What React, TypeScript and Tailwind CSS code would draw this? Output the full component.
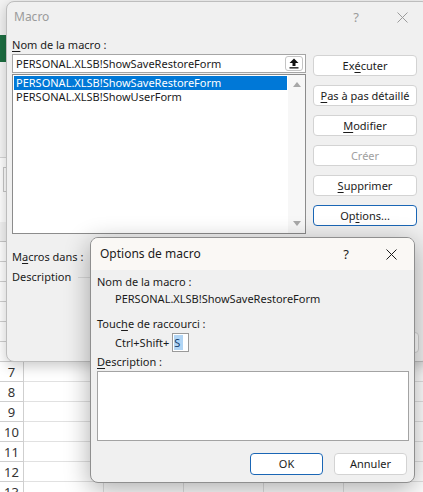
import React from 'react';

const rows = [1, 2, 3, 4, 5, 6, 7, 8, 9, 10, 11, 12, 13];
const cols = [0, 1, 2, 3, 4];

function U({ children }: { children: React.ReactNode }) {
  return <span className="underline underline-offset-[2px] decoration-[1px]">{children}</span>;
}

function CloseIcon({ color }: { color: string }) {
  return (
    <svg width="11" height="11" viewBox="0 0 11 11">
      <path d="M0.5 0.5 L10.5 10.5 M10.5 0.5 L0.5 10.5" stroke={color} strokeWidth="1" />
    </svg>
  );
}

function Btn({
  children,
  primary,
  disabled,
  className = '',
}: {
  children: React.ReactNode;
  primary?: boolean;
  disabled?: boolean;
  className?: string;
}) {
  return (
    <div
      className={`flex items-center justify-center rounded-[4px] bg-white ${
        primary ? 'border-[1.5px] border-[#1a66b5]' : 'border border-[#d3d3d3]'
      } ${disabled ? 'text-[#a0a0a0]' : 'text-[#1b1b1b]'} ${className}`}
    >
      {children}
    </div>
  );
}

export default function App() {
  return (
    <div className="relative w-[423px] h-[492px] overflow-hidden bg-white text-[11px] leading-[16px] text-[#1b1b1b] font-['Noto_Sans',sans-serif]">
      {/* Excel behind the dialogs */}
      <div className="flex flex-col">
        <div className="h-[35px] bg-[#f3f3f3]" />
        <div className="h-[27px] bg-[#1d6f42]" />
        <div className="h-[96px] bg-[#f7f7f7] border-b border-[#d6d6d6]" />
        <div className="h-[64px] bg-white pt-[9px]">
          <div className="ml-[3px] h-[25px] w-[60px] border border-[#c8c8c8] bg-white" />
        </div>
        <div className="h-[20px] bg-[#f3f3f3] border-b border-[#c8c8c8]" />
        {rows.map((r) => (
          <div key={r} className="flex h-[20px] shrink-0">
            <div className="w-[24px] shrink-0 border-r border-b border-[#cfcfcf] bg-white flex items-center justify-center text-[13px] text-[#333]">
              {r >= 7 ? r : ''}
            </div>
            {cols.map((c) => (
              <div key={c} className="w-[80px] shrink-0 border-r border-b border-[#e1e1e1]" />
            ))}
          </div>
        ))}
      </div>

      {/* Macro dialog */}
      <div className="absolute left-[6px] top-[1px] w-[424px] h-[361px] rounded-[8px] border border-[#bdbdbd] bg-[#f0f0f0] shadow-[0_4px_14px_rgba(0,0,0,0.22)] flex flex-col">
        <div className="flex h-[30px] items-center pl-[7px] pr-[4px] text-[#9b9b9b]">
          <span className="text-[12px]">Macro</span>
          <span className="ml-auto w-[46px] text-center text-[13px]">?</span>
          <span className="w-[46px] flex justify-center">
            <CloseIcon color="#9b9b9b" />
          </span>
        </div>

        <div className="flex pl-[5px]">
          <div className="w-[294px] flex flex-col">
            <div className="mt-[5px] h-[16px]">
              <U>N</U>om de la macro :
            </div>
            <div className="mt-[1px] h-[19px] flex items-center border border-[#a5a5a5] bg-white pl-[3px] pr-[2px]">
              <span className="pt-[1px]">PERSONAL.XLSB!ShowSaveRestoreForm</span>
              <div className="ml-auto h-[15px] w-[18px] rounded-[3px] border border-[#c4c4c4] bg-white flex items-center justify-center">
                <svg width="10" height="11" viewBox="0 0 10 11">
                  <path d="M5 0.5 L9.5 5 L6.5 5 L6.5 8 L3.5 8 L3.5 5 L0.5 5 Z" fill="#111" />
                  <rect x="0.5" y="9.2" width="9" height="1.3" fill="#111" />
                </svg>
              </div>
            </div>
            <div className="mt-[1px] h-[160px] flex border border-[#8c8c8c] bg-white">
              <div className="flex-1 pl-[1px] pt-[1px]">
                <div className="h-[14px] bg-[#0078d7] pl-[2px] text-white leading-[14px]">
                  PERSONAL.XLSB!ShowSaveRestoreForm
                </div>
                <div className="h-[14px] pl-[2px] leading-[14px]">PERSONAL.XLSB!ShowUserForm</div>
              </div>
              <div className="w-[17px] ml-[1px] bg-[#f7f7f7] flex flex-col items-center justify-between pt-[7px] pb-[7px]">
                <svg width="8" height="5" viewBox="0 0 8 5">
                  <path d="M0 5 L4 0 L8 5 Z" fill="#a8a8a8" />
                </svg>
                <svg width="8" height="5" viewBox="0 0 8 5">
                  <path d="M0 0 L8 0 L4 5 Z" fill="#a8a8a8" />
                </svg>
              </div>
            </div>
            <div className="mt-[15px] h-[16px]">
              M<U>a</U>cros dans :
            </div>
            <div className="mt-[4px] h-[16px] flex items-center">
              <span>Description</span>
              <div className="ml-[7px] flex-1 border-t border-[#d8d8d8]" />
            </div>
          </div>

          <div className="ml-[7px] w-[104px] mt-[23px] flex flex-col gap-[9px]">
            <Btn className="h-[21px]">
              Ex<U>é</U>cuter
            </Btn>
            <Btn className="h-[21px]">
              <U>P</U>as à pas détaillé
            </Btn>
            <Btn className="h-[21px]">
              <U>M</U>odifier
            </Btn>
            <Btn className="h-[21px]" disabled>
              Créer
            </Btn>
            <Btn className="h-[21px]">
              <U>S</U>upprimer
            </Btn>
            <Btn className="h-[21px]" primary>
              Op<U>t</U>ions...
            </Btn>
          </div>
        </div>

        <div className="mt-[47px] flex justify-end pr-[10px]">
          <Btn className="h-[21px] w-[74px]">Annuler</Btn>
        </div>
      </div>

      {/* Options de macro dialog */}
      <div className="absolute left-[90px] top-[237px] w-[325px] h-[246px] rounded-[8px] border border-[#8f8f8f] bg-[#f0f0f0] shadow-[0_6px_26px_rgba(0,0,0,0.33)] flex flex-col overflow-hidden">
        <div className="flex h-[32px] shrink-0 items-center bg-[#faf8f5] pl-[9px]">
          <span className="text-[12px]">Options de macro</span>
          <span className="ml-auto w-[46px] text-center text-[13px]">?</span>
          <span className="w-[45px] flex justify-center">
            <CloseIcon color="#1b1b1b" />
          </span>
        </div>
        <div className="flex flex-col px-[6px]">
          <div className="mt-[4px] h-[16px]">Nom de la macro :</div>
          <div className="mt-[1px] h-[16px] pl-[18px]">PERSONAL.XLSB!ShowSaveRestoreForm</div>
          <div className="mt-[9px] h-[16px]">
            Touc<U>h</U>e de raccourci :
          </div>
          <div className="mt-[1px] h-[19px] flex items-center pl-[18px]">
            <span>Ctrl+Shift+</span>
            <div className="ml-[3px] h-[19px] w-[17px] border border-[#9a9a9a] bg-white pl-[1px] pt-[1px]">
              <div className="h-[15px] w-[9px] bg-[#b1d5f5] leading-[15px] text-[#15406e]">S</div>
            </div>
          </div>
          <div className="mt-[2px] h-[16px]">
            <U>D</U>escription :
          </div>
          <div className="mt-[1px] h-[70px] border border-[#a3a3a3] bg-white mr-[-1px]" />
          <div className="mt-[12px] flex justify-end gap-[11px] pr-[1px]">
            <Btn primary className="h-[22px] w-[73px]">
              OK
            </Btn>
            <Btn className="h-[22px] w-[73px]">Annuler</Btn>
          </div>
        </div>
      </div>
    </div>
  );
}
